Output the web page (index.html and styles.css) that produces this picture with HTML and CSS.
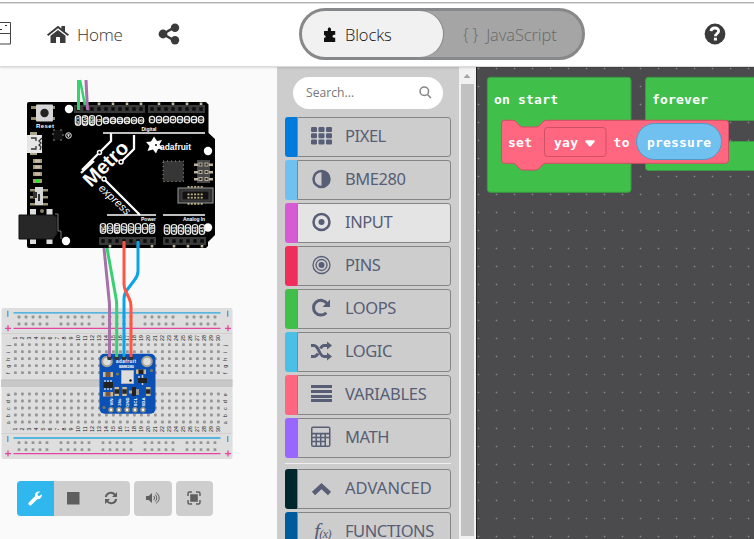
FILE: index.html
```html
<!DOCTYPE html>
<html lang="en">
<head>
<meta charset="utf-8">
<title>MakeCode Maker</title>
<link rel="stylesheet" href="styles.css">
</head>
<body>
<header class="topbar">
  <svg class="logo" width="12" height="26" viewBox="0 0 12 26"><path d="M0 1.5H10.5V23H0M0 12.5H10" fill="none" stroke="#444"/><path d="M0 8.5H2M5 4.500H7" stroke="#333"/></svg>
  <a class="home"><svg width="22" height="19" viewBox="0 0 22 19"><path d="M0 9.5 11 .8l3.4 2.7V1H18v5.4l4 3.1-1.2 1.4L11 3.2 1.2 10.9z"/><path d="M3.5 10.7 11 4.9l7.5 5.8V18H13v-6H9v6H3.5z"/></svg><span>Home</span></a>
  <svg class="share" width="22" height="22" viewBox="0 0 22 22"><path d="M17 4 5 11l12 7" fill="none" stroke="#3b3b3b" stroke-width="2.6"/><circle cx="5" cy="11" r="4.4"/><circle cx="17" cy="4.8" r="4.2"/><circle cx="17" cy="17.2" r="4.2"/></svg>
  <div class="switch">
    <div class="tab active"><svg width="12" height="15" viewBox="0 0 12 15"><path d="M0 4H3.8V2.3C3.8 0 7 0 7 2.3V4h4.2v4c-3.5-1.3-3.5 4 0 2.5V15H0v-4.2c2.2.4 2.2-3 0-2.5z"/></svg><span>Blocks</span></div>
    <div class="tab"><span class="braces">{ }</span><span>JavaScript</span></div>
  </div>
  <svg class="help" width="22" height="22" viewBox="0 0 22 22"><circle cx="11" cy="11" r="10.4"/><path d="M7 8.2C7.3 3.8 15 4 14.6 8.3c-.2 2.2-3.2 2.4-3.2 5" fill="none" stroke="#fff" stroke-width="2.8"/><path d="M9.9 14.7h3v2.8h-3z" fill="#fff"/></svg>
</header>
<main class="editor">
  <section class="simulator">
    <svg id="sim" width="277" height="395" viewBox="0 68 277 395" font-family="Liberation Sans">
      <g id="bread"></g>
      <g id="board"></g>
      <g id="sensor"></g>
      <g id="wires"></g>
    </svg>
    <div class="controls">
      <div class="group"><button class="on"><svg width="15" height="15" viewBox="0 0 15 15"><path d="M2.2 12.6 8.5 6.4" stroke="#fff" stroke-width="3.6" stroke-linecap="round"/><path d="M13.7 3.3 11 5.2 9.6 4.2 9.7 2.4 12.2.8C9.4-.1 7 1.5 7 4.4 7 7 9 8.6 11.1 8c2-.6 3.1-2.6 2.6-4.7z" fill="#fff"/></svg></button><button><svg width="13" height="13"><path d="M0 0h12.5v12.5H0z" fill="#5f5f5f"/></svg></button><button><svg width="14" height="14" viewBox="0 0 14 14"><g fill="none" stroke="#5f5f5f" stroke-width="2"><path d="M1.8 6C2.5 1.7 8 .1 11 3.8M12.2 8c-.8 4.3-6.2 5.9-9.2 2.2"/></g><path d="M13 1v5H8zM1 13V8h5z" fill="#5f5f5f"/></svg></button></div>
      <div class="group"><button><svg width="14" height="12" viewBox="0 0 14 12"><path d="M0 4h2.7L6 1v10L2.7 8H0z" fill="#5f5f5f"/><path d="M7.5 4c1.4.9 1.4 3.1 0 4M8.8 2.4c2.6 1.7 2.6 5.5 0 7.2M10 .7c4.2 2.3 4.2 8.3 0 10.6" fill="none" stroke="#5f5f5f"/></svg></button></div>
      <div class="group"><button><svg width="14" height="14" viewBox="0 0 14 14"><path d="M3.2 3.2h7.6v7.6H3.2z" fill="#5f5f5f"/><path d="M1 5V2.5Q1 1 2.5 1H5M9 1h2.5Q13 1 13 2.5V5M13 9v2.5Q13 13 11.5 13H9M5 13H2.5Q1 13 1 11.5V9" fill="none" stroke="#5f5f5f" stroke-width="1.5"/></svg></button></div>
    </div>
  </section>
  <aside class="toolbox">
    <div class="search"><span>Search...</span><svg width="13" height="13" viewBox="0 0 13 13"><circle cx="5.3" cy="5.3" r="4.3"/><path d="m8.500 8.500 3.500 3.500"/></svg></div>
    <div class="cat pixel"><i></i><div><svg viewBox="0 0 22 22"><rect x="0" y="2" width="6" height="5" rx="1.2"/><rect x="7.5" y="2" width="6" height="5" rx="1.2"/><rect x="15" y="2" width="6" height="5" rx="1.2"/><rect x="0" y="8.2" width="6" height="5" rx="1.2"/><rect x="7.5" y="8.2" width="6" height="5" rx="1.2"/><rect x="15" y="8.2" width="6" height="5" rx="1.2"/><rect x="0" y="14.4" width="6" height="5" rx="1.2"/><rect x="7.5" y="14.4" width="6" height="5" rx="1.2"/><rect x="15" y="14.4" width="6" height="5" rx="1.2"/></svg><span>PIXEL</span></div></div>
    <div class="cat bme"><i></i><div><svg viewBox="0 0 22 22"><circle cx="10.5" cy="11" r="8" class="line"/><path d="M10.5 3a8 8 0 0 1 0 16z"/></svg><span>BME280</span></div></div>
    <div class="cat input hover"><i></i><div><svg viewBox="0 0 22 22"><circle cx="10.5" cy="11" r="8" class="line"/><circle cx="10.5" cy="11" r="3"/></svg><span>INPUT</span></div></div>
    <div class="cat pins"><i></i><div><svg viewBox="0 0 22 22"><circle cx="10.5" cy="11" r="8.5" class="thin"/><circle cx="10.5" cy="11" r="5.5" class="thin"/><circle cx="10.5" cy="11" r="3"/></svg><span>PINS</span></div></div>
    <div class="cat loops"><i></i><div><svg viewBox="0 0 22 22"><path d="M15.3 15.8A7.4 7.4 0 1 1 16 6.500" class="thick"/><path d="M19 2.500V10h-7.500z"/></svg><span>LOOPS</span></div></div>
    <div class="cat logic"><i></i><div><svg viewBox="0 0 22 22"><path d="M0 5.500h3c5 0 5 11 10 11h4M0 16.500h3c1.800 0 3-1.200 4-3M9.500 8.500c1-2 2-3 3.500-3h4" class="thick"/><path d="M16 1.500 21 5.500l-5 4zM16 12.500l5 4-5 4z"/></svg><span>LOGIC</span></div></div>
    <div class="cat vars"><i></i><div><svg viewBox="0 0 22 22"><path d="M0 2h21v3H0zM0 7h21v3H0zM0 12h21v3H0zM0 16h21v3H0z"/></svg><span>VARIABLES</span></div></div>
    <div class="cat math"><i></i><div><svg viewBox="0 0 22 22"><path fill-rule="evenodd" d="M2 .5h15.500q2 0 2 2V19q0 2-2 2H2q-2 0-2-2V2.500q0-2 2-2zM1.500 2v4.800H18V2zM1.500 8.500v2.300h3V8.500zm4.500 0v2.300h3V8.500zm4.500 0v2.300h3V8.500zm4.500 0v2.300h3V8.500zM1.500 12.300v2.500h3v-2.500zm4.500 0v2.500h3v-2.500zm4.500 0v2.500h3v-2.500zM1.500 16.300v3.200h3v-3.200zm4.500 0v3.200h3v-3.200zm4.500 0v3.200h3v-3.200zm4.500-4v7.200h3v-7.200z"/></svg><span>MATH</span></div></div>
    <hr>
    <div class="cat advanced"><i></i><div><svg viewBox="0 0 22 22"><path d="m2.500 16.500 8-7.500 8 7.500" class="chev"/></svg><span>ADVANCED</span></div></div>
    <div class="cat functions"><i></i><div><em>f<small>(x)</small></em><span>FUNCTIONS</span></div></div>
  </aside>
  <div class="scroll"><svg width="16" height="17"><path d="m4.500 11 3.500-4 3.500 4z" fill="#a3a3a3"/></svg><div class="thumb"></div></div>
  <section class="workspace">
    <svg width="278" height="472" viewBox="476 67 278 472">
      <defs><pattern id="grid" x="469" y="59" width="18" height="18" patternUnits="userSpaceOnUse"><path d="M8 9.500h3M9.500 8v3" stroke="#5c5c5e"/><path d="M9 9h1v1H9z" fill="#88888a"/></pattern></defs>
      <path d="M476 67h278v472H476z" fill="url(#grid)"/>
      <path d="M476 67h1v472h-1z" fill="#242424"/>
      <rect x="487.300" y="77.300" width="143.700" height="115" rx="3" class="event"/>
      <path d="M760 77.300H648.500q-3 0-3 3V167.500q0 3 3 3H760V141.500H656V120.500H760z" class="event"/>
      <path d="M504.500 120.300h8q2 0 3.500 1.500l3.500 3.700q1.500 1.500 3.500 1.500h13q2 0 3.500-1.500l3.500-3.700q1.500-1.500 3.500-1.500h179q3 0 3 3v37q0 3-3 3H546q-2 0-3.500 1.500l-3.500 3.700q-1.500 1.500-3.500 1.500H523q-2 0-3.500-1.500l-3.500-3.700q-1.500-1.500-3.500-1.500h-8q-3 0-3-3v-37q0-3 3-3z" fill="#ff6680" stroke="#cf4f66"/>
      <rect x="544.500" y="127.500" width="61.500" height="29" rx="3" fill="none" stroke="#cf4f66"/>
      <rect x="636.500" y="123.500" width="85" height="36" rx="18" fill="#70c0f0" stroke="#5599c2"/>
      <path d="M586.500 140.300h7q2 0 1 1.600l-3.500 4q-1 1-2 0l-3.500-4q-1-1.600 1-1.600z" fill="#fff"/>
      <g class="blocktext"><text x="494" y="104" textLength="64">on start</text><text x="652" y="104" textLength="56">forever</text><text x="508" y="147" textLength="24">set</text><text x="554" y="147" textLength="24">yay</text><text x="613.500" y="147" textLength="16">to</text><text x="647" y="147" textLength="64">pressure</text></g>
    </svg>
  </section>
</main>
<script src="script.js"></script>
</body>
</html>
```
FILE: styles.css
```css
* { box-sizing: border-box; }
body { margin: 0; width: 754px; height: 539px; overflow: hidden; font-family: "Open Sans", sans-serif; background: #fafafa; display: flex; flex-direction: column; }
.topbar { height: 67px; flex: none; padding: 4px 0 2px; background: linear-gradient(#fff 2px, #b0b0b0 2px, #b0b0b0 3px, #ddd 3px, #ddd 4px, #fff 4px); border-bottom: 1px solid #d9dcdb; display: flex; align-items: center; position: relative; z-index: 1; box-shadow: 0 1px 2px rgba(0,0,0,.12); fill: #3b3b3b; }
.logo { width: 12px; margin-right: 35px; }
.home { display: flex; align-items: center; gap: 8px; width: 111px; font-weight: 300; font-size: 17px; color: #333; letter-spacing: -.2px; }
.home svg, .home span, .share, .help { flex: none; }
.share { margin-right: 119px; }
.switch { flex: none; width: 286px; height: 52px; border: 3px solid #878889; border-radius: 26px; background: #a5a5a5; display: flex; font-weight: 300; font-size: 16.500px; }
.tab { display: flex; align-items: center; color: #686868; padding-left: 20px; gap: 8px; letter-spacing: -.1px; }
.tab.active { width: 141px; color: #111; fill: #111; background: #f1f1f1; border-radius: 23px; padding-left: 22px; gap: 9px; box-shadow: 1px 0 1px #888; }
.braces { font-size: 16px; }
.help { margin-left: 119px; }
.editor { flex: 1; display: flex; height: 472px; }
.simulator { width: 277px; height: 472px; background: #fafafa; display: flex; flex-direction: column; flex: none; }
#sim { display: block; flex: none; margin-top: 1px; }
.controls { display: flex; gap: 4px; margin: 18px 0 0 17px; }
.group { display: flex; background: #cecece; border-radius: 4px; overflow: hidden; }
.group button { width: 38px; height: 35px; border: 0; padding: 0 0 1px; background: none; display: flex; align-items: center; justify-content: center; }
.group .on { width: 37px; background: #2fb7ee; }
.group:last-child button { width: 37px; padding-right: 1px; }
.toolbox { width: 182px; height: 472px; overflow: hidden; background: #cdcdcd; padding: 10px 8px 0; flex: none; }
.search { width: 150px; height: 32px; margin: 0 8px 8px; border-radius: 16px; background: #fff; display: flex; align-items: center; justify-content: space-between; padding: 0 11px 2px 13px; color: #777; font-size: 12.200px; }
.search svg { fill: none; stroke: #858585; stroke-width: 1.500; }
.cat { height: 40px; width: 166px; margin-bottom: 3px; display: flex; }
.cat i { width: 12px; border-radius: 3px 0 0 3px; }
.cat > div { flex: 1; border: 1px solid #858585; border-radius: 0 3px 3px 0; display: flex; align-items: center; padding: 0 0 2px 13px; gap: 12px; color: #575e75; font-size: 16.500px; }
.cat span { font-family: "Noto Sans", sans-serif; letter-spacing: -.45px; padding-bottom: 2px; }
.vars span { letter-spacing: -.25px; }
.advanced span { letter-spacing: .05px; }
.cat svg { width: 22px; height: 22px; fill: #575e75; flex: none; }
.cat .line, .cat .thin, .cat .thick, .cat .chev { fill: none; stroke: #575e75; stroke-width: 2.500; }
.cat .thin { stroke-width: 1.300; }
.cat .thick { stroke-width: 3; }
.cat .chev { stroke-width: 4.500; }
.hover > div { background: #e4e4e4; }
.toolbox hr { border: 0; height: 1px; background: #eee; margin: 5px 0; }
.cat em { width: 22px; padding-left: 3px; font: italic 22px "Liberation Serif", serif; flex: none; letter-spacing: -1px; }
.cat small { font-size: 13px; }
.pixel i { background: #007bdc; } .bme i { background: #70c0f0; } .input i { background: #d65cd6; } .pins i { background: #ef2f5b; }
.loops i { background: #40bf4a; } .logic i { background: #4cbfe6; } .vars i { background: #ff6680; } .math i { background: #9966ff; }
.advanced i { background: #00272b; } .functions i { background: #005a9e; }
.scroll { width: 17px; height: 472px; background: #f1f1f1; flex: none; display: flex; flex-direction: column; }
.scroll svg { flex: none; }
.thumb { width: 13px; height: 452px; margin-left: 2px; background: #c1c1c1; }
.workspace { width: 278px; background: #4b4b4d; flex: none; }
.workspace svg { display: block; }
.event { fill: #40bf4a; stroke: #389c40; }
.blocktext { font: bold 13px "DejaVu Sans Mono", monospace; fill: #fff; }
```
FILE: script.js
```js
const R = (x, y, w, h, fill, extra = '') => `<rect x="${x}" y="${y}" width="${w}" height="${h}" fill="${fill}" ${extra}/>`;
const C = (x, y, r, fill, extra = '') => `<circle cx="${x}" cy="${y}" r="${r}" fill="${fill}" ${extra}/>`;
const P = (d, stroke, w, extra = '') => `<path d="${d}" fill="none" stroke="${stroke}" stroke-width="${w}" ${extra}/>`;
const T = (x, y, s, size, extra = '') => `<text x="${x}" y="${y}" font-size="${size}" ${extra}>${s}</text>`;
const turned = (x, y, s, size, extra = '') => T(0, 0, s, size, `transform="translate(${x} ${y}) rotate(-90)" text-anchor="middle" ${extra}`);
const put = (id, html) => { document.getElementById(id).innerHTML = html; };

// Breadboard
let b = R(1.5, 308, 231, 151, '#dedede', 'rx="2"') + R(1, 380, 231.5, 7, '#c8c8c8') + R(1.5, 379.5, 231, 1, '#bcbcbc');
b += R(1.5, 333, 231, 1, '#d0d0d0') + R(1.5, 433, 231, 1, '#d0d0d0');
for (const y of [312.8, 438]) b += P(`M13.5 ${y}H220.5`, '#28a8dc', 1.3) + P(`M7.8 ${y - 2}v6M227.7 ${y - 2}v6`, '#28a8dc', 1.3);
for (const y of [328.3, 453.6]) b += P(`M13.5 ${y}H220.5M5 ${y}h6M8 ${y - 3}v6M225 ${y}h6M228 ${y - 3}v6`, '#e5459f', 1.3);
for (const y of [317, 324, 442.7, 449.7])
  for (let g = 0; g < 5; g++) for (let i = 0; i < 5; i++) b += R(17.6 + g * 42 + i * 7, y - 1.4, 2.8, 2.8, '#969696', 'rx=".7"');
[344.7, 351.7, 358.7, 365.7, 372.7, 394, 401, 408, 415, 422].forEach((y, r) => {
  for (let i = 0; i < 30; i++) b += R(14 + i * 7, y - 1.4, 2.8, 2.8, '#969696', 'rx=".7"');
  for (const x of [9.8, 227]) b += turned(x, y + .6, 'jihgfedcba'[r], 5.5, 'fill="#333"');
});
for (let i = 1; i <= 30; i++) for (const y of [338, 429]) b += turned(10.3 + i * 7, y, i, 5.2, 'fill="#111"');
put('bread', b);

// Microcontroller board
let m = '<path d="M29 102H206l2.500 2.500V133l6.500 6v96l-7 7v4l-2 2H29q-2 0-2-2V104q0-2 2-2z" fill="#000"/>';
m += R(31, 106, 24, 3, '#948d70') + R(31, 117, 24, 3, '#948d70') + R(36, 104.5, 17, 17, '#d6d6d6', 'rx="1"') + C(44.5, 113, 4.2, '#222');
m += R(30, 132, 7, 23, '#aaa38a') + R(27, 135, 15, 18, '#e6e6e6') + P('M31 138h5v3M31 149h5v-3M42 138l-3 3 2 2-2 2 2 2-1 3', '#333', 1.3);
m += R(53, 130, 10, 10, '#111', 'stroke="#888" stroke-dasharray="2 5"') + C(68.5, 135.5, 2.8, '#111', 'stroke="#eee"') + P('M67 135h3M68.500 134v3', '#eee', .8);
[161, 167, 174, 181].forEach((y, i) => { m += R(33, y - 2, 9, 4, '#a39b7c') + R(35, y - 1.5, 5, 3, i === 3 ? '#19f421' : '#cbb9ac'); });
for (const y of [189, 196, 203]) m += R(30, y, 18, 2.5, '#9b9478');
m += R(35, 187, 8, 18, '#d5d5d5') + R(33, 192, 4, 6, '#333') + R(38, 194, 2, 7, '#333') + C(42, 211, 2, '#8d8261');
m += R(30, 209, 6, 35, '#ddd') + R(46.500, 209, 6, 35, '#ddd') + '<path d="M19 215h34l4 2v17l-4 5H19z" fill="#272727" stroke="#111"/>' + P('M55 214h3v17h3v8', '#aaa', .7);
for (const [x, y] of [[69, 109], [66, 241], [208, 151], [208, 227.5]]) m += C(x, y, 4.2, '#fff');

// Pin headers with their round pin labels
const header = (x, y, names, tall, ly) => {
  let s = R(x, y, names.length * 7 + 1, 8, '#3a3a3a');
  names.forEach((name, i) => {
    const cx = x + 4 + i * 7, h = i < tall ? 10 : 6.5;
    s += R(cx - 1.7, y + 2.2, 3.4, 3.6, '#0c0c0c');
    if (i % 2) s += R(cx - 1.3, ly < y ? y + 8 : y - 2.5, 2.6, 2.5, '#c4baa0');
    s += R(cx - 2.7, ly - h / 2, 5.4, h, '#111', 'rx="2.7" stroke="#eee" stroke-width="1.2"');
    s += turned(cx + 1.7, ly, name, 4.5, 'fill="#fff" font-weight="bold"');
  });
  return s;
};
m += header(74, 105, ['SCL', 'SDA', 'REF', 'G', 13, 12, 11, 10, 9, 8], 4, 120.5) + header(148, 105, [7, 6, 5, 4, 3, 2, 1, 0], 0, 119.7);
m += header(99, 237, ['NC', 'IO', 'RST', '3V', '5V', 'G', 'G', 'VIN'], 8, 228.5) + header(163, 237, ['A0', 'A1', 'A2', 'A3', 'A4', 'A5'], 6, 229.5);
m += '<g fill="#fff" font-weight="bold">' + T(36, 127.5, 'Reset', 6, 'textLength="18"') + T(141.5, 131, 'Digital', 5, 'textLength="15"') + T(141, 221, 'Power', 5, 'textLength="15"') + T(183, 221, 'Analog In', 5, 'textLength="22"');
m += T(0, 0, 'Metro', 20, 'transform="translate(91 188) rotate(-45)" textLength="55" lengthAdjust="spacingAndGlyphs"') + T(0, 0, 'express', 11, 'transform="translate(98 189) rotate(43)" textLength="39" font-weight="normal" font-style="italic"') + T(160, 150.3, 'adafruit', 9, 'textLength="31" lengthAdjust="spacingAndGlyphs"') + '</g>';
m += P('M103 133H205M107 215H156M163 215H205', '#fff', 1.5) + P('M111 133v8l-12 12-17 17M134 135v14l-13 13M81 173l13-12M104 179l36 36', '#fff', 2.3);
for (const [x, y] of [[99.5, 152.5], [104, 179], [121, 162]]) m += C(x, y, 2, '#000', 'stroke="#fff" stroke-width="1.5"');
m += '<path d="m154 136.500 3 4.500 5-1-2.500 4.500 3.500 4-5 .500-2 4.500-3-4-5.500 1.500 2-5-3.500-4 5-.500z" fill="#fff"/>' + C(156, 145, 1, '#000');
m += R(163, 161, 20.500, 20.500, '#363636', 'stroke="#a39c82" stroke-width="1" stroke-dasharray="1 3"');
m += R(197, 160, 13, 23, '#484848') + R(178, 188, 35, 15, '#303030', 'stroke="#999"') + R(182, 191, 27, 9, '#111', 'stroke="#444"');
for (const y of [163.500, 171, 178]) m += R(194, y, 4, 2.500, '#bdb59a') + R(209, y, 4, 2.500, '#bdb59a') + R(198.500, y - 1, 4, 4, '#b5ae98') + R(204.500, y - 1, 4, 4, '#b5ae98') + R(199.500, y, 2, 2, '#222') + R(205.500, y, 2, 2, '#222');
for (let i = 0; i < 5; i++) for (const y of [186, 193.500, 196.800, 203]) m += R(187.500 + i * 3.3, y, 2, 1.8, '#b9ac80');
put('board', m);

// BME280 breakout
let s = R(99.5, 353.7, 56, 60, '#0b50b5', 'rx="5"');
for (const x of [107, 147]) s += C(x, 361.5, 4.8, '#ddd', 'stroke="#a9a48e" stroke-width="2"');
s += '<g fill="#fff" font-weight="bold">' + T(116, 363, 'adafruit', 4.5, 'textLength="20"') + T(119, 367.5, 'BME280', 4, 'textLength="15"') + '</g>';
s += R(121.5, 370.5, 12, 13, '#ddd', 'stroke="#a9b0bb" stroke-width="1"') + C(130.5, 380.5, 1.2, '#111');
const chip = (x, y, w, h, c) => R(x, y, w, h, '#c7b99b') + (w > h ? R(x + w / 4, y, w / 2, h, c) : R(x, y + h / 4, w, h / 2, c));
s += chip(103, 372, 10, 5, '#765549') + chip(103, 392, 10, 4.5, '#765549') + chip(136, 369.5, 10, 4.5, '#222');
for (const x of [114.5, 122.3, 146]) s += chip(x, 387, 4.5, 9, '#272727');
s += P('M105 380v10M108 380v10M111 380v10M142.500 375v10M139 376v3', '#ccc', 1.5) + R(103.5, 382, 9.5, 6, '#222') + R(138, 378, 9, 5, '#222') + R(132, 387, 4, 9, '#222') + R(129, 390.500, 3, 3, '#aaa') + R(136, 389, 3, 6, '#999');
for (const [x, y] of [[117.5, 374], [151.5, 370.5], [104, 407.5]]) s += C(x, y, 1.6, '#777b58');
['VIN', '3Vo', 'GND', 'SCL', 'SDA'].forEach((t, i) => {
  const x = 111 + i * 8;
  s += C(x, 409.7, 2, '#fff', 'stroke="#9b967e" stroke-width="1.5"') + turned(x + 1.7, 402, t, 4.2, 'fill="#fff" font-weight="bold"');
});
put('sensor', s);

// Jumper wires, ending in sockets on the breadboard
const A = '#a870a8', G = '#38d070', B = '#0aa4ea', D = '#ff5544';
put('wires', [109.5, 116.7, 124, 131].map(x => R(x - 2.2, 355.5, 4.4, 4.4, '#333', 'rx="1"')).join('')
  + P('M80 80l5 25', G, 2.5) + P('M78.5 80v30', G, 3) + P('M86 80l1.500 30', A, 3)
  + P('M104 248l5 51q.5 4 .5 8v50', A, 3) + P('M107 248l9 50q.7 4 .7 8v51', G, 3)
  + P('M138 241v30q0 5-3.500 9l-7.500 10q-3 4-3 9v58', B, 3) + P('M124 241v43q0 4 2 8l3 6q2 4 2 9v50', D, 3));
```
